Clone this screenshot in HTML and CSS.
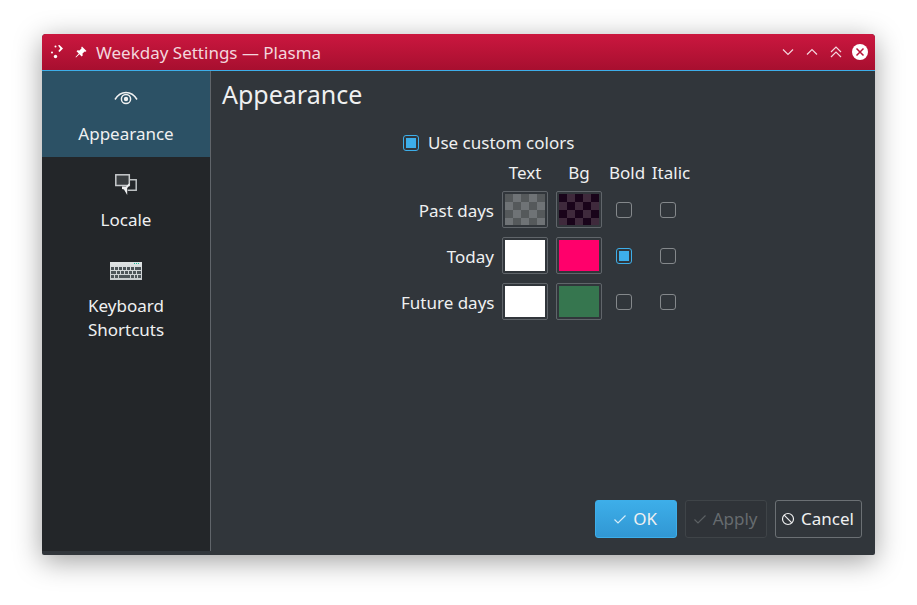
FILE: index.html
```html
<!DOCTYPE html>
<html lang="en">
<head>
  <meta charset="UTF-8" />
  <title>Weekday Settings — Plasma</title>
  <link rel="stylesheet" href="styles.css">
</head>
<body>
  <div class="window">
    <header class="titlebar">
      <svg class="tb-icon" width="16" height="16" viewBox="0 0 16 16">
        <g fill="#fff">
          <circle cx="6.500" cy="2.500" r="1" />
          <path d="M9 1.500l1.500-.5 3.500 3.500-3.500 3.500-1.200-1 2-2.500z" />
          <circle cx="3" cy="8.500" r="1" />
          <circle cx="6.500" cy="12.500" r="1.700" />
        </g>
      </svg>
      <svg class="tb-icon pin" width="12" height="12" viewBox="0 0 12 12">
        <path fill="#fff" d="M7 .5l4.500 4.500-1 .8-.8-.4-2.200 2.100.2 2-1 1-2.300-2.300L1 11.500l-.5-.5 3.300-3.400L1.500 5.300l1-1 2 .2 2.100-2.200-.4-.8z" />
      </svg>
      <span class="title">Weekday Settings — Plasma</span>
      <div class="tb-buttons">
        <svg width="12" height="8" viewBox="0 0 12 8"><path class="chev" d="M1 1.500l5 5 5-5" /></svg>
        <svg width="12" height="8" viewBox="0 0 12 8"><path class="chev" d="M1 6.500l5-5 5 5" /></svg>
        <svg width="12" height="12" viewBox="0 0 12 12"><path class="chev" d="M1 6l5-5 5 5M1 11l5-5 5 5" /></svg>
        <svg class="close" width="16" height="16" viewBox="0 0 16 16">
          <circle cx="8" cy="8" r="8" fill="#fff" />
          <path d="M4.500 4.500l7 7M11.500 4.500l-7 7" stroke="#b81238" stroke-width="1.500" fill="none" />
        </svg>
      </div>
    </header>

    <div class="body">
      <aside class="sidebar">
        <div class="side-item active">
          <svg class="side-icon" width="32" height="32" viewBox="0 0 32 32">
            <path d="M5 17.500c3-5 7-7 11-7s8 2 11 7" fill="none" stroke="#eff0f1" stroke-width="1.500" />
            <circle cx="16" cy="17" r="4.600" fill="none" stroke="#eff0f1" stroke-width="1.500" />
            <circle cx="16" cy="17" r="2.200" fill="#eff0f1" />
          </svg>
          <span>Appearance</span>
        </div>
        <div class="side-item">
          <svg class="side-icon" width="32" height="32" viewBox="0 0 32 32">
            <path d="M19 11.800h7.200v10.500h-8.500" fill="none" stroke="#bcc0c2" stroke-width="1.500" />
            <rect x="5.800" y="6.800" width="13.500" height="10.700" fill="#3a3e41" stroke="#c8cbcd" stroke-width="1.500" />
            <path d="M12 18.500h4l3.500-3.500v2.500l-2.300 2.500v7l-3.200-5.500-2-.5z" fill="#eff0f1" />
          </svg>
          <span>Locale</span>
        </div>
        <div class="side-item">
          <svg class="side-icon" width="32" height="32" viewBox="0 0 32 32">
            <defs>
              <linearGradient id="kbd" x1="0" y1="0" x2="0" y2="1">
                <stop offset="0" stop-color="#e0e4e5" />
                <stop offset="1" stop-color="#c6cbcd" />
              </linearGradient>
            </defs>
            <rect y="8" width="32" height="18" fill="url(#kbd)" />
            <g fill="#1abc9c">
              <rect x="24" y="9" width="1" height="1" />
              <rect x="26" y="9" width="1" height="1" />
              <rect x="28" y="9" width="1" height="1" />
            </g>
            <path class="keys" d="M1 14.500h3M5 14.500h3M9 14.500h3M13 14.500h3M17 14.500h3M21 14.500h3M25 14.500h6M1 18.500h5M7 18.500h3M11 18.500h3M15 18.500h3M19 18.500h3M23 18.500h3M27 18.500h4M1 22.500h3M5 22.500h3M9 22.500h11M21 22.500h3M25 22.500h2M28 22.500h3" />
          </svg>
          <span>Keyboard Shortcuts</span>
        </div>
      </aside>

      <main class="content">
        <h1>Appearance</h1>
        <div class="form">
          <label class="use-custom">
            <span class="check on"></span>
            <span>Use custom colors</span>
          </label>
          <div class="grid">
            <span></span>
            <span class="col-head">Text</span>
            <span class="col-head">Bg</span>
            <span class="col-head">Bold</span>
            <span class="col-head">Italic</span>

            <span class="row-label">Past days</span>
            <span class="swatch"><i class="fill checker-grey"></i></span>
            <span class="swatch"><i class="fill checker-plum"></i></span>
            <span class="check-cell"><span class="check"></span></span>
            <span class="check-cell"><span class="check"></span></span>

            <span class="row-label">Today</span>
            <span class="swatch"><i class="fill white"></i></span>
            <span class="swatch"><i class="fill pink"></i></span>
            <span class="check-cell"><span class="check on"></span></span>
            <span class="check-cell"><span class="check"></span></span>

            <span class="row-label">Future days</span>
            <span class="swatch"><i class="fill white"></i></span>
            <span class="swatch"><i class="fill green"></i></span>
            <span class="check-cell"><span class="check"></span></span>
            <span class="check-cell"><span class="check"></span></span>
          </div>
        </div>
        <div class="buttons">
          <button class="btn primary" type="button">
            <svg width="16" height="16" viewBox="0 0 16 16"><path d="M2.500 8.500l3.500 3.500 7.500-7.500" fill="none" stroke="#d5ecf9" stroke-width="1.200" /></svg>
            OK
          </button>
          <button class="btn disabled" type="button" disabled>
            <svg width="16" height="16" viewBox="0 0 16 16"><path d="M2.500 8.500l3.500 3.500 7.500-7.500" fill="none" stroke="#5c6164" stroke-width="1.200" /></svg>
            Apply
          </button>
          <button class="btn" type="button">
            <svg width="16" height="16" viewBox="0 0 16 16"><circle cx="8" cy="8" r="5.500" fill="none" stroke="#eff0f1" stroke-width="1.200" /><path d="M4.200 4.200l7.600 7.600" stroke="#eff0f1" stroke-width="1.200" /></svg>
            Cancel
          </button>
        </div>
      </main>
    </div>
  </div>
</body>
</html>
```

FILE: styles.css
```css
html, body {
  height: 100%;
}
body {
  margin: 0;
  padding: 34px 42px 50px;
  box-sizing: border-box;
  background: #fff;
  font-family: 'Noto Sans', sans-serif;
  font-size: 17px;
  line-height: 24px;
  color: #eff0f1;
}
.window {
  height: 521px;
  display: flex;
  flex-direction: column;
  background: #31363b;
  border-radius: 4px 4px 2px 2px;
  box-shadow: 0 6px 28px rgba(0, 0, 0, 0.38);
  overflow: hidden;
}
.titlebar {
  height: 36px;
  flex: none;
  display: flex;
  align-items: center;
  padding: 0 7px;
  background: linear-gradient(#cb173f, #a70f2f);
  border-bottom: 1px solid #3daee9;
  color: #f3d6dd;
}
.tb-icon {
  flex: none;
}
.pin {
  margin-left: 10px;
}
.title {
  margin-left: 9px;
  padding-top: 2px;
}
.tb-buttons {
  margin-left: auto;
  display: flex;
  align-items: center;
  gap: 12px;
}
.close {
  margin-left: -2px;
}
.chev {
  fill: none;
  stroke: #f3d6dd;
  stroke-width: 1.2;
}
.body {
  flex: 1;
  display: flex;
  min-height: 0;
}
.sidebar {
  width: 168px;
  flex: none;
  margin-bottom: 4px;
  background: #232629;
  border-right: 1px solid #60656a;
}
.side-item {
  display: flex;
  flex-direction: column;
  align-items: center;
  gap: 8px;
  padding: 11px 24px;
  text-align: center;
}
.side-item.active {
  background: #2c5165;
}
.content {
  flex: 1;
  display: flex;
  flex-direction: column;
  padding: 7px 13px 17px 11px;
  min-width: 0;
}
h1 {
  margin: 0;
  font-size: 25px;
  line-height: 32px;
  font-weight: 400;
}
.form {
  margin: 21px 0 0 168px;
}
.use-custom {
  display: flex;
  align-items: center;
  gap: 9px;
  margin-left: 13px;
}
.check {
  width: 16px;
  height: 16px;
  box-sizing: border-box;
  display: block;
  border: 1px solid #84888b;
  border-radius: 3px;
}
.check.on {
  border-color: #3daee9;
  padding: 2px;
}
.check.on::after {
  content: "";
  display: block;
  height: 100%;
  background: #3daee9;
}
.grid {
  display: grid;
  grid-template-columns: 93px 46px 46px 34px 38px;
  grid-template-rows: 21px 37px 37px 37px;
  column-gap: 8px;
  row-gap: 9px;
  margin-top: 6px;
  margin-left: 11px;
}
.col-head {
  display: flex;
  justify-content: center;
}
.row-label {
  text-align: right;
  align-self: center;
  white-space: nowrap;
  padding-top: 2px;
}
.swatch {
  display: block;
  box-sizing: border-box;
  padding: 2px;
  border: 1px solid #60656a;
  border-radius: 2px;
}
.fill {
  display: block;
  height: 100%;
}
.white {
  background: #fff;
}
.pink {
  background: #ff006b;
}
.green {
  background: #36764f;
}
.checker-grey {
  background: repeating-conic-gradient(#6f7376 0 25%, #55595b 0 50%) 0 0 / 16px 16px;
}
.checker-plum {
  background: repeating-conic-gradient(#3f2a3c 0 25%, #19041a 0 50%) 0 0 / 16px 16px;
}
.check-cell {
  display: flex;
  align-items: center;
  padding-left: 6px;
}
.check-cell + .check-cell {
  padding-left: 8px;
}
.buttons {
  margin-top: auto;
  display: flex;
  justify-content: flex-end;
  gap: 8px;
}
.btn {
  height: 38px;
  min-width: 82px;
  display: flex;
  align-items: center;
  justify-content: center;
  gap: 5px;
  padding: 0 7px 0 4px;
  background: #31363b;
  border: 1px solid #6b7074;
  border-radius: 3px;
  color: #eff0f1;
  font: inherit;
}
.btn.primary {
  background: linear-gradient(#3daee9, #3197d3);
  border-color: #3daee9;
}
.btn.disabled {
  background: #2f3338;
  border-color: #3f4448;
  color: #666b6f;
}
.keys {
  fill: none;
  stroke: #4d5559;
  stroke-width: 3;
}
```
